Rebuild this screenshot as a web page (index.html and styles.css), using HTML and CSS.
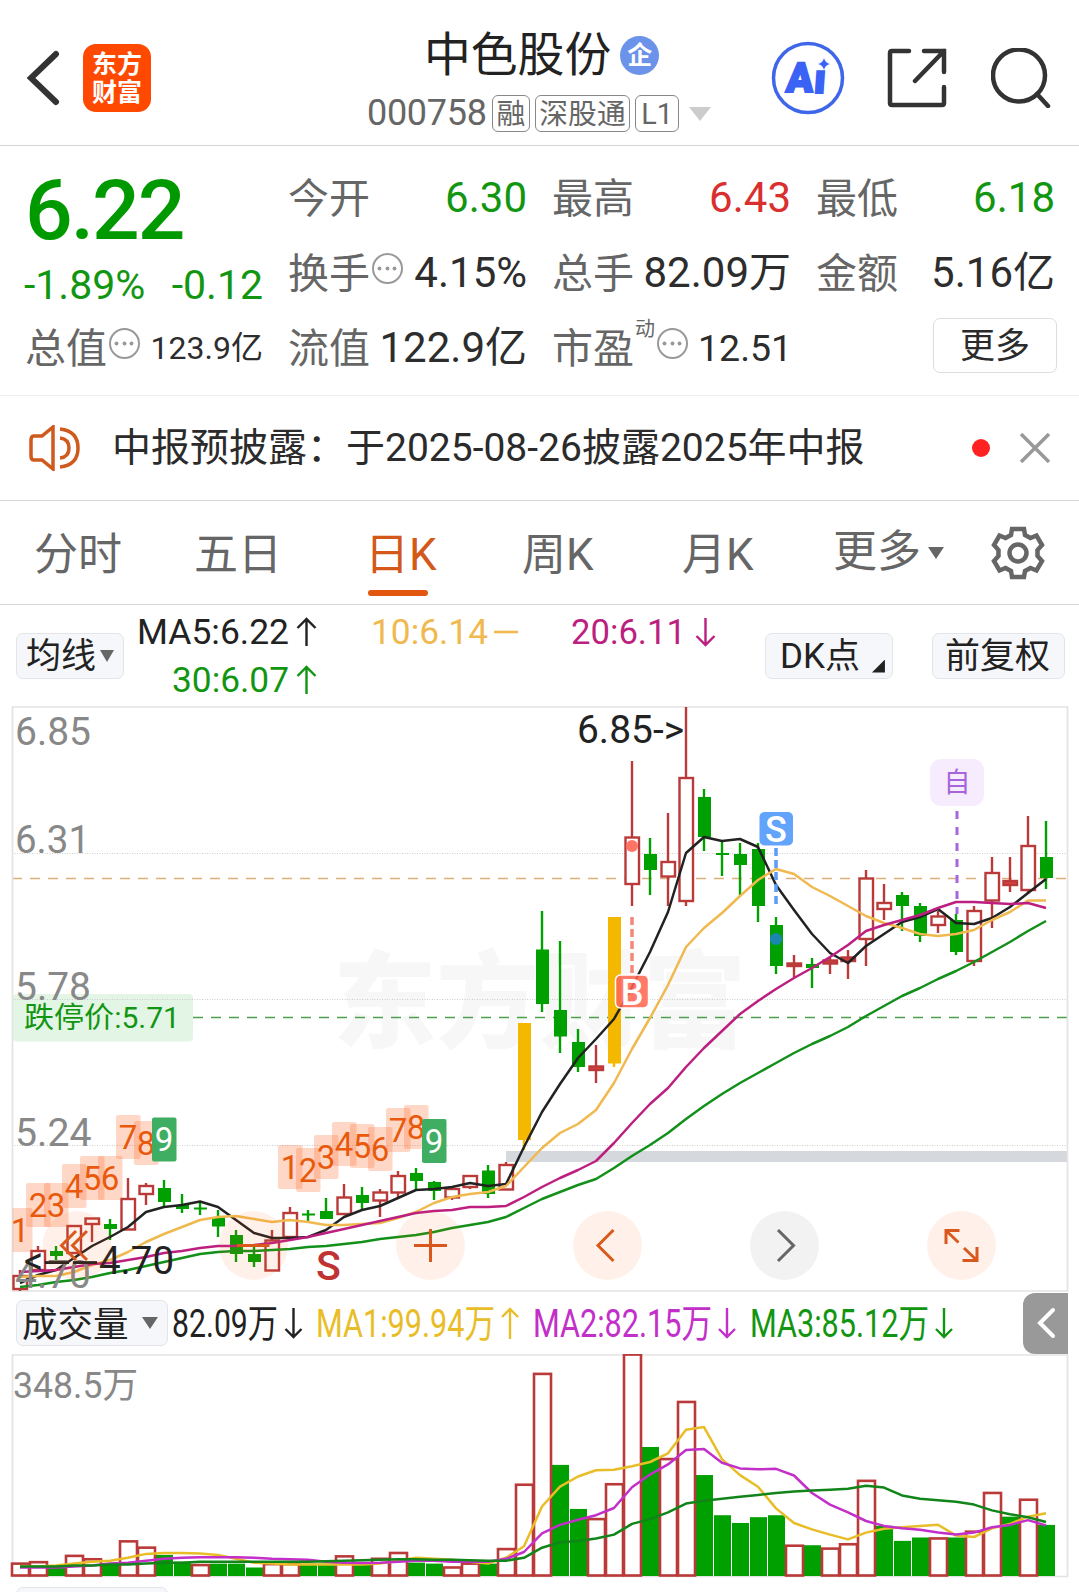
FILE: index.html
```html
<!DOCTYPE html>
<html lang="zh-CN">
<head>
<meta charset="utf-8">
<title>中色股份 000758</title>
<link rel="stylesheet" href="styles.css">
</head>
<body>
<div class="page">
  <header class="topbar">
    <div class="top-left">
      <svg class="back" viewBox="0 0 34 56"><path d="M30 4 5 28 30 52"/></svg>
      <div class="logo"><span>东方</span><span>财富</span></div>
    </div>
    <div class="top-mid">
      <div class="title">中色股份<span class="badge">企</span></div>
      <div class="code"><span class="num">000758</span><span class="tag">融</span><span class="tag">深股通</span><span class="tag">L1</span><i class="caret"></i></div>
    </div>
    <div class="top-right">
      <svg class="ai" viewBox="0 0 74 74"><circle cx="37" cy="37" r="34.5"/><text x="0" y="51" textLength="27" lengthAdjust="spacingAndGlyphs" transform="translate(18 0) skewX(-4)">A</text><text x="0" y="52" transform="translate(46 0) skewX(-4)">ı</text><path d="M53 17q1.200 5 6 6q-4.800 1-6 6q-1.200-5-6-6q4.800-1 6-6z"/></svg>
      <svg class="share" viewBox="0 0 60 60"><path d="M22 3H5Q3 3 3 5V55Q3 57 5 57H55Q57 57 57 55V39M37 3H57V24M57 3 28 33"/></svg>
      <svg class="search" viewBox="0 0 60 60"><circle cx="28" cy="27.500" r="26"/><path d="M46 46 57 58"/></svg>
    </div>
  </header>

  <section class="quote">
    <div class="price-col">
      <div class="price">6.22</div>
      <div class="change"><span>-1.89%</span><span>-0.12</span></div>
      <div class="cell small"><span class="lab">总值</span><i class="more-dot"></i><span class="val">123.9亿</span></div>
    </div>
    <div class="col">
      <div class="cell"><span class="lab">今开</span><span class="val green">6.30</span></div>
      <div class="cell"><span class="lab">换手</span><i class="more-dot"></i><span class="val">4.15%</span></div>
      <div class="cell"><span class="lab">流值</span><span class="val">122.9亿</span></div>
    </div>
    <div class="col">
      <div class="cell"><span class="lab">最高</span><span class="val red">6.43</span></div>
      <div class="cell"><span class="lab">总手</span><span class="val">82.09万</span></div>
      <div class="cell pe"><span class="lab">市盈</span><span class="sup">动</span><i class="more-dot"></i><span class="val">12.51</span></div>
    </div>
    <div class="col">
      <div class="cell"><span class="lab">最低</span><span class="val green">6.18</span></div>
      <div class="cell"><span class="lab">金额</span><span class="val">5.16亿</span></div>
      <div class="cell"><span class="more-btn">更多</span></div>
    </div>
  </section>

  <section class="notice">
    <svg class="speaker" viewBox="0 0 52 46"><path d="M24 2V44L13 35H5Q2 35 2 31V15Q2 11 5 11H13ZM31 4Q49 6 49 23T31 42M31 13Q40 14 40 23T31 33"/></svg>
    <span class="notice-text">中报预披露：于2025-08-26披露2025年中报</span>
    <i class="dot"></i>
    <svg class="close" viewBox="0 0 30 30"><path d="M1 1 29 29M29 1 1 29"/></svg>
  </section>

  <nav class="tabs">
    <span>分时</span><span>五日</span><span class="on">日K</span><span>周K</span><span>月K</span><span class="more">更多<i></i></span>
    <svg class="gear" viewBox="-27 -27 54 54"><path d="M-6 -24H6L7 -18L12.500 -15L18.500 -17.500L24 -8L19.500 -3V3L24 8L18.500 17.500L12.500 15L7 18L6 24H-6L-7 18L-12.500 15L-18.500 17.500L-24 8L-19.500 3V-3L-24 -8L-18.500 -17.500L-12.500 -15L-7 -18Z"/><circle r="8.500"/></svg>
  </nav>

  <section class="indicators">
    <span class="pill ma-pill">均线<i></i></span>
    <svg class="ma-values" viewBox="130 605 600 101" id="ma-values"></svg>
    <span class="pill dk-pill">DK点<i></i></span>
    <span class="pill fq-pill">前复权</span>
  </section>

  <svg class="kline" viewBox="0 706 1079 586" id="kline"></svg>

  <section class="volume-head">
    <span class="pill vol-pill">成交量<i></i></span>
    <svg class="vol-values" viewBox="168 1292 855 62" id="vol-values"></svg>
    <span class="side"><svg viewBox="0 0 20 32"><path d="M17 3 4 16 17 29"/></svg></span>
  </section>

  <svg class="volume" viewBox="0 1354 1079 226" id="volume"></svg>
  <div class="next"><span class="pill"></span></div>
</div>
<script src="chart.js"></script>
</body>
</html>
```
FILE: styles.css
```css
* { box-sizing: border-box; }
body { margin: 0; background: #fff; font-family: Roboto, "Noto Sans CJK SC", sans-serif; line-height: 1.2; color: #2b2b2b; }
.page { width: 1079px; height: 1592px; overflow: hidden; background: #fff; }
svg { display: block; fill: none; flex: none; }
span { white-space: nowrap; }

.topbar { height: 146px; border-bottom: 1px solid #d6d6d6; display: grid; grid-template-columns: 365px 1fr 313px; }
.top-left { display: flex; align-items: center; padding: 11px 0 0 26px; gap: 23px; }
.back { width: 34px; height: 56px; stroke: #333; stroke-width: 6; stroke-linecap: round; }
.logo { width: 68px; height: 68px; border-radius: 13px; background: #ff4800; color: #fff; font-weight: 700; font-size: 25px; line-height: 28px; display: flex; flex-direction: column; align-items: center; justify-content: center; padding-top: 1px; }
.title { font-size: 46.800px; line-height: 58px; height: 56px; margin: 27px 0 0 59px; display: flex; align-items: center; color: #222; }
.badge { width: 39px; height: 39px; border-radius: 50%; background: #6b93ea; color: #fff; font-size: 25px; font-weight: 700; line-height: 1; display: flex; align-items: center; justify-content: center; margin-left: 9px; }
.code { display: flex; align-items: center; margin: 12px 0 0 2px; height: 37px; color: #666; }
.num { font-size: 36px; width: 125px; letter-spacing: -.3px; }
.tag { border: 1.500px solid #888; border-radius: 6px; height: 37px; font-size: 28.800px; line-height: 37px; padding: 0 3.500px; margin-right: 5px; }
.tag:nth-child(4) { padding: 0 5px; }
.caret { border: 11px solid transparent; border-top: 14px solid #ccc; border-bottom: 0; margin-left: 5px; }
.top-right { display: flex; align-items: center; padding: 11px 0 0 5px; }
.ai { width: 74px; height: 74px; }
.ai circle { stroke: #3e66e8; stroke-width: 3.500; }
.ai path, .ai text { fill: #3a63f5; }
.ai text { font: 900 41px Roboto; stroke: #3a63f5; stroke-width: 2; }
.share { width: 60px; height: 60px; margin-left: 42px; stroke: #333; stroke-width: 4.500; stroke-linecap: round; }
.search { width: 60px; height: 60px; margin-left: 44px; stroke: #333; stroke-width: 4.500; stroke-linecap: round; }

.quote { height: 250px; border-bottom: 1px solid #eee; display: grid; grid-template-columns: 237px 238px 238px 238px; column-gap: 26px; padding: 14px 0 0 26px; }
.quote .price-col, .quote .col { min-width: 0; }
.price { height: 91px; font-size: 84px; line-height: 101px; font-weight: 500; color: #009a00; letter-spacing: -2px; margin-left: -1px; }
.change { height: 59px; line-height: 69px; display: flex; justify-content: space-between; font-size: 41px; color: #129612; margin-left: -2px; }
.cell { height: 75px; display: flex; align-items: center; font-size: 41px; }
.price-col .cell, .col .lab { margin-left: -1px; }
.lab { color: #666; padding-top: 4px; }
.val { margin-left: auto; color: #2d2d2d; font-size: 42px; padding-top: 2px; }
.small .val { font-size: 32px; }
.pe .val { font-size: 37.500px; margin-left: 10px; }
.green { color: #129612; }
.red { color: #d92f2f; }
.more-dot { flex: none; width: 31px; height: 31px; margin: 0 0 9px 2px; border: 2.500px solid #999; border-radius: 50%; background: radial-gradient(circle, #999 1.700px, transparent 2.300px) center / 7px 7px no-repeat, radial-gradient(circle, #999 1.700px, transparent 2.300px) 2px center / 7px 7px no-repeat, radial-gradient(circle, #999 1.700px, transparent 2.300px) 17px center / 7px 7px no-repeat; }
.sup { font-size: 20px; color: #666; align-self: flex-start; margin: 7px 0 0 1px; }
.more-btn { margin: 0 -2px 4px auto; width: 124px; height: 55px; border: 1.500px solid #ddd; border-radius: 7px; font-size: 35px; line-height: 55px; text-align: center; }

.notice { height: 105px; border-bottom: 1px solid #d6d6d6; display: flex; align-items: center; padding: 0 29px; }
.speaker { width: 52px; height: 46px; stroke: #d05a1e; stroke-width: 3.500; }
.notice-text { font-size: 39px; margin-left: 31px; flex: 1; padding-top: 1px; }
.dot { width: 18px; height: 18px; border-radius: 50%; background: #f22; }
.close { width: 30px; height: 30px; margin-left: 30px; stroke: #999; stroke-width: 3.500; }

.tabs { height: 104px; border-bottom: 1px solid #d6d6d6; display: grid; grid-template-columns: 160px 166px 157px 159px 159px 156px 52px; padding-left: 34px; align-items: center; font-size: 44px; color: #666; }
.tabs span { height: 103px; line-height: 109px; }
.tabs .on { color: #d4581a; padding-left: 5px; }
.tabs .on::after { content: ""; display: block; width: 60px; height: 6px; border-radius: 3px; background: #e2560f; margin: -20px 0 0 3px; }
.tabs span:nth-child(4) { padding-left: 5px; }
.tabs span:nth-child(5) { padding-left: 6px; }
.tabs .more { display: flex; align-items: center; margin-left: -2px; }
.tabs i, .pill i { display: inline-block; border: 8px solid transparent; border-top: 12px solid #666; border-bottom: 0; margin-left: 7px; }
.gear { width: 54px; height: 54px; stroke: #666; stroke-width: 4.500; }

.indicators { height: 101px; display: flex; align-items: center; }
.pill { height: 46px; border: 1.500px solid #e2e4e8; border-radius: 7px; background: #f6f7fa; font-size: 35px; line-height: 46px; display: flex; align-items: center; color: #222; flex: none; }
.indicators .pill, .vol-pill { padding-top: 3px; }
.ma-pill { width: 108px; margin-left: 16px; padding-left: 9px; }
.pill.ma-pill i { margin: -3px 0 0 4px; border-width: 12px 7px 0; }
.ma-values { width: 600px; height: 101px; margin-left: 6px; }
.dk-pill { width: 128px; margin-left: 35px; padding-left: 14px; }
.pill.dk-pill i { border: 0; width: 13px; height: 13px; margin: 18px 0 0 12px; background: #222; clip-path: polygon(100% 0, 100% 100%, 0 100%); }
.fq-pill { width: 133px; margin-left: 39px; padding-left: 12px; }
.kline { width: 1079px; height: 586px; }
.volume-head { height: 62px; display: flex; align-items: center; }
.vol-pill { width: 152px; margin-left: 16px; padding-left: 5px; font-size: 35.500px; }
.pill.vol-pill i { margin: -3px 0 0 13px; }
.vol-values { width: 855px; height: 62px; }
.side { width: 45px; height: 61px; background: #999; border-radius: 12px 0 0 12px; display: flex; align-items: center; padding-left: 13px; }
.side svg { width: 20px; height: 32px; stroke: #fff; stroke-width: 4; stroke-linecap: round; }
.volume { width: 1079px; height: 226px; }
.next { padding: 7px 0 0 16px; }
.next .pill { width: 152px; }
```
FILE: chart.js
```js
const X0 = 20, STEP = 18;
const RED = '#b93a38', GREEN = '#00a000', YELLOW = '#f5b800';
const xAt = i => X0 + STEP * i;
const rect = (x, y, w, h, a = '') => `<rect x="${x}" y="${y}" width="${w}" height="${h}" ${a}/>`;
const path = (d, color, w = 2.5, a = '') => `<path d="${d}" stroke="${color}" stroke-width="${w}" ${a}/>`;
const text = (s, x, y, size, color, len, a = '') =>
  `<text x="${x}" y="${y}" font-size="${size}" fill="${color}" ${len ? `textLength="${len}" lengthAdjust="spacingAndGlyphs"` : ''} ${a}>${s}</text>`;
const poly = (ys, color, f = v => v) => path('M' + ys.map((v, i) => `${xAt(i)} ${f(v).toFixed(1)}`).join('L'), color, 2.5, 'stroke-linejoin="round"');
const set = (id, html) => { document.getElementById(id).innerHTML = html; };

// kind, high, body top, body bottom, low
const candles = `r 1270 1276 1289 1291|r 1246 1251 1270 1270|g 1246 1251 1256 1260|r 1226 1226 1253 1253|r 1218 1218.500 1224 1242|g 1219 1224 1229 1240|r 1178 1199 1229.500 1229|r 1183 1186 1194 1205|g 1180 1188 1202 1206|g 1194 1205 1209 1213|g 1203 1207.500 1209.500 1215|g 1210 1217 1226.500 1237|g 1230 1235 1254 1262|g 1247 1254 1262 1267|r 1230 1240.500 1270.500 1270|r 1207 1213 1237 1237|g 1210 1213.500 1215.500 1221|g 1198 1211 1219 1219|r 1184 1197.500 1214 1214|g 1187 1195 1203 1209|r 1189 1192.500 1200.500 1217|r 1171 1176 1192.500 1197|g 1168 1173 1181 1190|g 1181 1182 1191 1200|r 1187 1189 1197.500 1200|r 1175 1176 1187 1189|g 1165 1170.500 1194 1198|r 1162 1165 1189.500 1189|y 1023 1023 1140 1150|g 911 949.500 1004 1012|g 941 1010 1036.500 1053|g 1029 1042 1067 1072|r 1045 1066.500 1070 1083|y 917 917 1063.500 1067|r 761 837.500 884 906|g 838 854 870 895|r 813 862 876.500 906|r 707 778 901 906|g 789 797 837 851|g 840 853 855 876|g 843 854 865 895|g 843 849 906 922|g 917 925 966 974|r 955 963.500 966 977|g 958 964 968 988|r 958 960.500 963.500 974|r 950 957.500 961 979|r 870 878.500 939 966|r 884 903 909 920|g 892 895 906 931|g 903 906 936 942|r 911 916.500 925 933|g 914 920 952 955|r 906 911 961 966|r 857 873 900.500 928|r 857 881 885 892|r 816 846 890 894|g 821 857 878 889`
  .split('|').map(s => { const [k, ...v] = s.split(' '); return [k, ...v.map(Number)]; });

const ma5 = [1283,1275,1270,1258,1246,1237,1227,1212,1207,1205,1201.5,1207,1220,1233,1238,1238,1237,1230,1217,1210,1206,1198,1190,1189,1187,1183,1186,1184,1147,1112,1084,1058,1039,1019,987,952,912,853,837,841,839,847,885,910,934,953,963,946,934,922,917,909,923,924,918,907,893,879];
const ma10 = [1277,1276,1276,1272,1265,1260,1252,1242,1234,1227,1220,1217,1216,1219,1222,1220,1222,1225,1225,1224,1223,1218,1212,1203,1197,1194,1192,1186,1167,1148,1133,1124,1110,1083,1049,1018,985,947,928,913,896,880,869,874,887,896,906,916,923,928,934,936,934,930,920,912,900.5,900.5];
const ma20 = [1272,1271,1270,1267,1264,1263,1260,1257,1253,1251,1248,1246,1246,1245,1243,1240,1237,1233,1229,1225,1221,1217,1213,1211,1210,1207,1207,1206,1197,1187,1178,1170,1161,1143,1123,1104,1088,1067,1048,1031,1014,1001,989,978,968,957,945,931,925,920,915,908,902,902,903,904,903,908];
const ma30 = [1287,1285,1282,1280,1277,1273,1270,1266,1262,1258,1254,1252,1251,1251,1250,1249,1247,1246,1244,1242,1239,1237,1235,1232,1228,1225,1222,1217,1208,1199,1192,1185,1179,1168,1156,1145,1133,1119,1106,1094,1083,1073,1063,1053,1044,1036,1027,1016,1006,996,988,979,971,962,952,942,931,921];

function candle([k, hi, top, bot, lo], i) {
  const x = xAt(i);
  if (k === 'r') {
    const body = bot - top;
    return path(`M${x} ${hi}V${top}M${x} ${bot}V${lo}`, RED, 2.4) +
      rect(x - 6.5, top, 13.5, body, `fill="${body < 5 ? '#d94040' : '#fff'}" stroke="${RED}" stroke-width="2.4"`);
  }
  const c = k === 'g' ? GREEN : YELLOW;
  return path(`M${x} ${hi}V${lo}`, c, 2.4) + rect(x - 6, top, 13, bot - top, `fill="${c}"`);
}

function counter(list) {
  return list.map(([n, i, y]) => {
    const nine = n === 9;
    return rect(xAt(i) - 12, y, 24.5, 44, `rx="2" fill="${nine ? '#3fae62' : '#ff6020'}" fill-opacity="${nine ? 1 : .25}"`) +
      text(n, xAt(i), y + 33.5, 33, nine ? '#fff' : '#e8590c', 0, 'text-anchor="middle"');
  }).join('');
}

let k = '';
k += text('东方财富', 333, 1039, 105, '#f7f7f7', 413, 'font-weight="900"');
k += rect(13, 994, 180, 47.5, 'rx="4" fill="#e3f5e5"');
[853.5, 999.5, 1145.5].forEach(y => { k += path(`M12 ${y}H1067`, '#ccc', 1, 'stroke-dasharray="1 1.5"'); });
k += rect(506, 1151, 561, 11, 'fill="#d5d8dd"');
k += path('M12 878.500H1067', '#dfae7c', 1.300, 'stroke-dasharray="10 8"');
k += path('M193 1017.500H1067', '#4da04d', 1.300, 'stroke-dasharray="10 8"');
k += path('M12.500 707H1067.500V1291H12.500Z', '#e3e3e3', 1.700);
k += candles.map(candle).join('');
k += poly(ma5, '#222') + poly(ma10, '#f0b94f') + poly(ma20, '#bd1f80') + poly(ma30, '#12901a');
k += text('6.85', 15, 745, 38, '#888', 76) + text('6.31', 15, 853, 38, '#888', 75) + text('5.78', 15, 1000, 38, '#888', 76);
k += text('5.24', 15, 1145.5, 38, '#888', 76.5) + text('4.70', 15, 1288, 38, '#888', 76);
k += text('跌停价:5.71', 24, 1028, 29, '#129612', 156);
k += `<clipPath id="plot"><rect x="12.500" y="706" width="1060" height="585"/></clipPath><g clip-path="url(#plot)">` +
  counter([[1,0,1208],[2,1,1183],[3,2,1183],[4,3,1164],[5,4,1156],[6,5,1156],[7,6,1115],[8,7,1121],[9,8,1117.5],
    [1,15,1145],[2,16,1148],[3,17,1135],[4,18,1122],[5,19,1124],[6,20,1127],[7,21,1108],[8,22,1105],[9,23,1119]]) + '</g>';
k += text('&lt;', 24, 1274, 38, '#222') + text('--', 43, 1274, 38, '#222', 56) + text('4.70', 99, 1274, 38, '#222', 75);
k += text('6.85-&gt;', 577, 743, 38.5, '#222', 107);
k += text('S', 328.5, 1280, 41, '#c03333', 0, 'text-anchor="middle" font-weight="500"');

// trade markers
k += path('M632 917V975', '#f4867a', 3.5, 'stroke-dasharray="8 4"') + '<circle cx="632" cy="846" r="6" fill="#ff7464"/>';
k += rect(615.5, 975, 33, 33, 'rx="5" fill="#ff6450" fill-opacity=".86" stroke="#fff" stroke-width="1.5"') + text('B', 632, 1004.5, 36, '#fff', 0, 'text-anchor="middle" font-weight="500"');
k += path('M776 848V904', '#5c9cf5', 3.5, 'stroke-dasharray="8 4"') + '<circle cx="776" cy="939" r="6" fill="#1b86b0"/>';
k += rect(759.5, 812, 33.5, 33.5, 'rx="5" fill="#62a3fb"') + text('S', 776, 842, 36, '#fff', 0, 'text-anchor="middle" font-weight="500"');
k += path('M957 811V914', '#a765dc', 3, 'stroke-dasharray="8 8"');
k += rect(930, 759, 54, 47, 'rx="11" fill="#f6ecfe"') + text('自', 957, 792, 27, '#a765dc', 0, 'text-anchor="middle"');

// floating controls
[77, 253.5, 430.5, 607.5, 784.5, 961.5].forEach((x, i) => {
  k += `<circle cx="${x}" cy="1245.5" r="34.5" fill="${i === 4 ? '#000' : '#ff6010'}" fill-opacity="${i === 4 ? .05 : .09}"/>`;
});
k += path('M76 1231 61.500 1245.500 76 1260M87 1231 72.500 1245.500 87 1260M237 1245.500H269.500M414 1245.500H447M430.500 1229V1262M613.500 1230 598 1245.500 613.500 1261M959.500 1230.500H946V1244M946 1230.500 958.500 1242.500M977 1247V1260.500H962.500M977 1260.500 964 1248', '#d9591d', 3);
k += path('M778 1230 793.500 1245.500 778 1261', '#666', 3);
set('kline', k);

// arrows: head points up or down, (x, y) is the top of the shaft
const arrow = (dir, x, y, w, h, c) => path(
  dir === 'up' ? `M${x} ${y + h}V${y + 1}M${x - w} ${y + w + 1}L${x} ${y + 1}L${x + w} ${y + w + 1}`
               : `M${x} ${y}V${y + h - 1}M${x - w} ${y + h - w - 1}L${x} ${y + h - 1}L${x + w} ${y + h - w - 1}`, c, 2.4);
set('ma-values',
  text('MA5:6.22', 137, 644, 35.5, '#222', 152) + arrow('up', 306.5, 618, 9, 28, '#222') +
  text('10:6.14', 371, 644, 35.5, '#f0b94f', 117) + path('M494 632H518', '#f0b94f', 2.6) +
  text('20:6.11', 571, 644, 35.5, '#bd1f80', 115) + arrow('down', 705.5, 618, 9, 28, '#bd1f80') +
  text('30:6.07', 172, 692, 35.5, '#129612', 117) + arrow('up', 306.5, 666, 9, 28, '#129612'));
set('vol-values',
  text('82.09万', 172, 1337, 38.5, '#222', 106) + arrow('down', 293.5, 1308, 8, 30, '#222') +
  text('MA1:99.94万', 316, 1337, 38.5, '#e8bd28', 179) + arrow('up', 510, 1308, 8, 31, '#e8bd28') +
  text('MA2:82.15万', 533, 1337, 38.5, '#c22fc9', 179) + arrow('down', 727, 1308, 8, 30, '#c22fc9') +
  text('MA3:85.12万', 750, 1337, 38.5, '#129612', 179) + arrow('down', 944, 1308, 8, 30, '#129612'));

// volume: bar tops, then moving averages
const scale = v => 1280 + (v - 1280) * 0.968;
const BASE = 1575.5;
const rising = 'rrgrrgrrggrgggrrggrgrrggrrgrrrggrrrgrrgggggrgrrrgggrgrrgrg';
const bars = [1573,1571.5,1577,1565,1568.5,1573,1550,1556.5,1564,1571,1574.5,1573,1573,1577,1573.5,1573.5,1573,1573,1565.5,1573,1568,1562,1572,1573,1577,1573,1573,1558,1491.5,1377,1471,1516.5,1527,1491,1357,1452.5,1465,1406,1481.5,1523,1531,1525,1523,1554.5,1554,1557.5,1553,1487.5,1534,1549.5,1546,1547,1546,1540,1500,1524.5,1507,1533];
const vma1 = [1576,1576,1575,1573,1571,1570,1567,1563,1562,1562,1562.5,1564,1568,1572,1573,1574,1574,1574,1574,1574,1573,1570,1567,1568,1569,1571,1573,1567,1555,1514,1493.5,1483,1476.6,1476,1472.5,1468,1459,1434.6,1432,1465,1481.5,1493.5,1516,1531,1537.6,1543,1548,1541,1537,1535.5,1534,1532.8,1544,1545.5,1536.5,1532,1524.5,1521];
const vma2 = [1577,1577,1577,1576,1575,1573,1572,1570,1568,1567,1566.5,1566.5,1566.5,1567,1568,1568.5,1569,1571,1572,1572.5,1572,1571,1570,1570,1571,1571,1571,1568,1561,1541.7,1533,1527.6,1523,1515.5,1494,1481,1470.5,1455.6,1454.6,1468.7,1474.6,1475.6,1475,1482,1500,1512,1520,1529,1534,1536.5,1538,1541,1543,1541,1535.5,1533,1528,1533.5];
const vma3 = [1576,1576,1576,1575,1575,1574,1574,1573,1572,1572,1571,1571,1571,1571,1571,1571,1571,1570.5,1570,1569.5,1569,1568.5,1568.5,1569,1569,1569.5,1570,1570,1567,1556.5,1551,1549.6,1547,1543,1532,1527,1520,1511,1508,1506,1504,1502,1500,1498.6,1497.6,1496.6,1495.6,1492.5,1494.5,1502.5,1506,1507.6,1509,1512,1518,1522,1525,1530];
let v = path('M12.500 1355H1067.500V1576.500H12.500Z', '#e3e3e3', 1.700);
const grn = [], rd = [];
bars.forEach((top, i) => {
  const x = xAt(i), y = scale(top);
  if (rising[i] === 'g') grn.push(rect(x - 8, y, 17, BASE + .5 - y, `fill="${GREEN}"`));
  else rd.push(rect(x - 8, y, 17, BASE - y, `fill="#fff" stroke="${RED}" stroke-width="2.6"`));
});
v += grn.join('') + rd.join('') + poly(vma1, '#e8bd28', scale) + poly(vma2, '#c22fc9', scale) + poly(vma3, '#12851a', scale);
v += text('348.5万', 13, 1398, 36.5, '#888', 125);
set('volume', v);
```
